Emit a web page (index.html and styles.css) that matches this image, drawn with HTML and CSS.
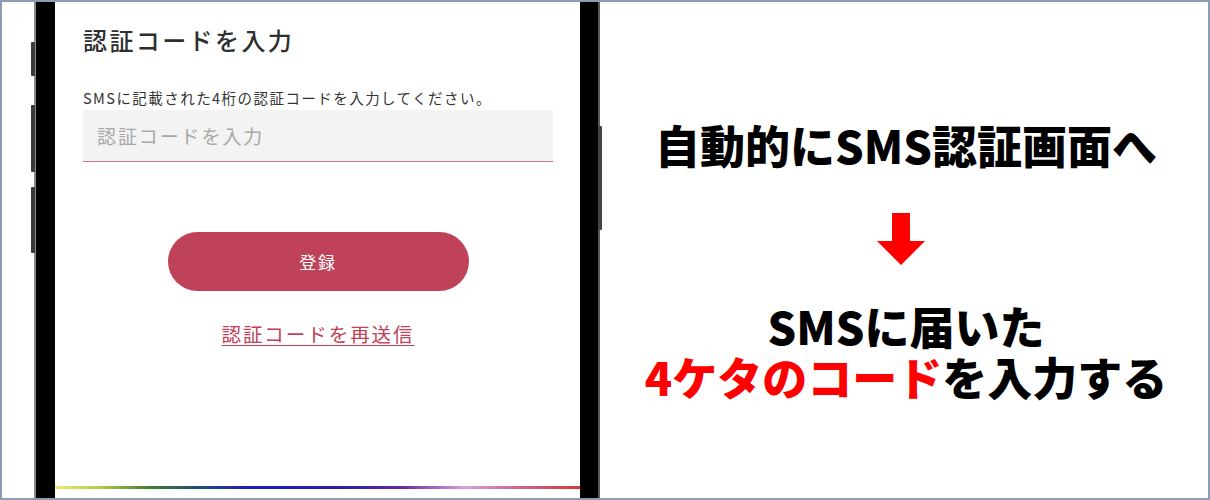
FILE: index.html
```html
<!DOCTYPE html>
<html lang="ja">
<head>
<meta charset="utf-8">
<link rel="stylesheet" href="styles.css">
</head>
<body>
<div class="frame">
  <div class="phone">
    <span class="side-btn l1"></span>
    <span class="side-btn l2"></span>
    <span class="side-btn l3"></span>
    <span class="side-btn r1"></span>
    <div class="screen">
      <h1 class="title">認証コードを入力</h1>
      <p class="desc">SMSに記載された4桁の認証コードを入力してください。</p>
      <div class="input"><span class="placeholder">認証コードを入力</span></div>
      <div class="btn">登録</div>
      <a class="resend">認証コードを再送信</a>
      <div class="rainbow"></div>
    </div>
  </div>
  <div class="panel">
    <div class="headline">自動的にSMS認証画面へ</div>
    <svg class="arrow" width="48" height="52" viewBox="0 0 48 52">
      <polygon points="15,0 33,0 33,28 48,28 24,52 0,28 15,28" fill="#ff0000"/>
    </svg>
    <div class="line first">SMSに届いた</div>
    <div class="line"><span class="red">4ケタのコード</span>を入力する</div>
  </div>
</div>
</body>
</html>
```
FILE: styles.css
```css
html, body {
  margin: 0;
  padding: 0;
  background: #ffffff;
}
.frame {
  width: 1210px;
  height: 500px;
  box-sizing: border-box;
  border: 2px solid #8e9cb3;
  display: flex;
  background: #ffffff;
  overflow: hidden;
}
.phone {
  position: relative;
  margin-left: 34px;
  width: 562px;
  box-sizing: border-box;
  border-left: 19px solid #000;
  border-right: 18px solid #000;
  box-shadow: -2px 0 0 #8a8a8a, 2px 0 0 #5a5a5a;
  display: flex;
  flex-shrink: 0;
}
.side-btn {
  position: absolute;
  width: 4px;
  background: #3a3a3a;
  border-radius: 1px;
}
.l1 { left: -24px; top: 40px; height: 34px; }
.l2 { left: -24px; top: 103px; height: 67px; }
.l3 { left: -24px; top: 185px; height: 66px; }
.r1 { right: -22px; top: 124px; height: 104px; background: #444; }
.screen {
  flex: 1;
  background: #fff;
  display: flex;
  flex-direction: column;
  padding: 22px 27px 0 28px;
  font-family: "Noto Sans CJK JP", "Noto Sans", sans-serif;
  color: #333;
}
.title {
  margin: 0;
  font-size: 24px;
  line-height: 32px;
  font-weight: 500;
  letter-spacing: 0.1em;
  color: #2e2e2e;
}
.desc {
  margin: 32px 0 0;
  font-size: 14.5px;
  line-height: 20px;
  letter-spacing: 0.1em;
  color: #333;
  white-space: nowrap;
}
.input {
  margin-top: 2px;
  height: 51px;
  background: #f3f3f3;
  border-bottom: 1px solid #d9768a;
  display: flex;
  align-items: center;
  padding-left: 14px;
}
.placeholder {
  font-size: 19px;
  letter-spacing: 0.1em;
  color: #a9a9a9;
}
.btn {
  margin: 70px auto 0;
  width: 301px;
  height: 59px;
  border-radius: 30px;
  background: #bf4258;
  color: #fff;
  font-size: 17px;
  letter-spacing: 0.1em;
  display: flex;
  align-items: center;
  justify-content: center;
}
.resend {
  margin: 30px auto 0;
  font-size: 19.5px;
  line-height: 26px;
  letter-spacing: 0.1em;
  color: #bf4258;
  text-decoration: underline;
  text-underline-offset: 3px;
  text-decoration-thickness: 1px;
}
.rainbow {
  margin: auto -27px 9px -28px;
  height: 3px;
  background: linear-gradient(to right, #ecec6a 0%, #b8cc50 8%, #3f7f30 18%, #1f4a7a 28%, #1a1ac8 38%, #2a20b0 55%, #6a2a98 66%, #d6a0e0 78%, #c86890 88%, #d83838 100%);
}
.panel {
  flex: 1;
  display: flex;
  flex-direction: column;
  align-items: center;
  padding-top: 117px;
  padding-left: 6px;
  font-family: "Noto Sans CJK JP", "Noto Sans", sans-serif;
  font-weight: 900;
  color: #000;
}
.headline {
  font-size: 45px;
  line-height: 52px;
  white-space: nowrap;
}
.arrow {
  display: block;
  margin-top: 42px;
  margin-left: -10px;
}
.line {
  font-size: 45px;
  line-height: 51px;
  height: 51px;
  white-space: nowrap;
  overflow: visible;
}
.line.first {
  margin-top: 35px;
}
.red {
  color: #ff0000;
}
```
